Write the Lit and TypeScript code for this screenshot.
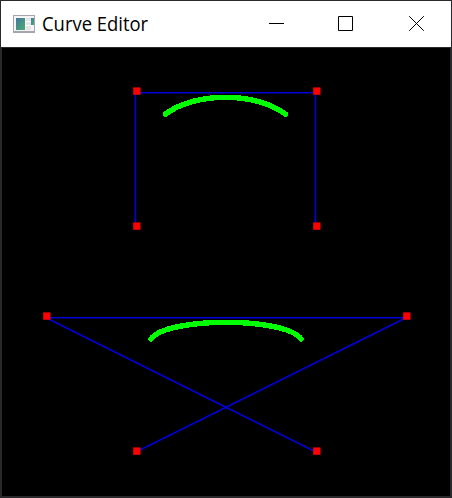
import { LitElement, html, css, svg } from "lit";
import { customElement } from "lit/decorators.js";

type Point = [number, number];

// Uniform cubic B-spline segment expressed as a Bezier path.
function splinePath([a, b, c, d]: Point[]): string {
  const mix = (f: (i: number) => number) => `${f(0).toFixed(2)} ${f(1).toFixed(2)}`;
  return `M${mix((i) => (a[i] + 4 * b[i] + c[i]) / 6)}C${mix((i) => (2 * b[i] + c[i]) / 3)} ${mix(
    (i) => (b[i] + 2 * c[i]) / 3
  )} ${mix((i) => (b[i] + 4 * c[i] + d[i]) / 6)}`;
}

const CURVES: Point[][] = [
  [[135.4, 227], [135.4, 92.7], [315.4, 92.7], [315.4, 227]],
  [[136, 452], [406, 317.7], [46, 317.7], [316, 452]],
];

@customElement("curve-canvas")
export class CurveCanvas extends LitElement {
  static styles = css`
    :host { display: block; background: #000; }
    svg { display: block; }
    .hull { fill: none; stroke: #0000d8; stroke-width: 1.6; }
    .diagonal { stroke-width: 1.3; }
    .spline { fill: none; stroke: #0f0; stroke-width: 5.4; stroke-linecap: round; shape-rendering: crispEdges; }
    .handle { fill: #f00; }
  `;
  render() {
    return html`<svg width="448" height="448" viewBox="2 48 448 448">
      ${CURVES.map(
        (pts) => svg`
          <polyline class="hull" points=${pts.map((p) => p.join(",")).join(" ")}></polyline>
          <path class="spline" transform="translate(0 -1)" d=${splinePath(pts)}></path>
          ${pts.map(
            ([x, y]) => svg`<rect class="handle" x=${Math.round(x + 0.3) - 2.8} y=${Math.floor(y) - 4.6} width="7.3" height="7.4"></rect>`
          )}`
      )}
    </svg>`;
  }
}

@customElement("app-root")
export class AppRoot extends LitElement {
  static styles = css`
    :host { display: block; }
    .window {
      box-sizing: border-box; width: 452px; height: 498px; overflow: hidden;
      background: #29292c; padding: 1px 1px 2px; display: flex; flex-direction: column;
    }
    .bar { height: 46px; flex: none; background: #fff; display: flex; align-items: center; }
    .app-icon { margin-left: 12px; width: 23px; height: 18px; flex: none; }
    .title {
      margin-left: 6px; flex: 1; color: #000; white-space: nowrap;
      font: 19.5px/46px "Open Sans", "Noto Sans", sans-serif;
    }
    .title span { display: inline-block; transform: scaleX(0.945); transform-origin: left; }
    .btn { width: 70px; height: 46px; display: flex; align-items: center; justify-content: center; flex: none; }
    .btn svg { display: block; fill: none; stroke: #000; }
    curve-canvas { width: 448px; height: 448px; margin: 1px 1px 0; }
  `;
  render() {
    return html`<div class="window">
      <div class="bar">
        <svg class="app-icon" viewBox="0 0 23 18">
          <defs>
            <linearGradient id="g" x1="0" y1="0" x2="1" y2="1">
              <stop offset="0" stop-color="#4078a0"></stop>
              <stop offset="1" stop-color="#4bab6c"></stop>
            </linearGradient>
          </defs>
          <rect width="22" height="18" fill="#a4a5ae"></rect>
          <rect x="1" y="1" width="20" height="15" fill="#f4f4f6"></rect>
          <rect x="3" y="3" width="9" height="12" fill="url(#g)"></rect>
          <rect x="13" y="3" width="5" height="12" fill="#e4e4e7"></rect>
          <rect x="13" y="6" width="5" height="1" fill="#fff"></rect>
          <rect x="13" y="10" width="5" height="1" fill="#fff"></rect>
          <rect x="18" y="3" width="3" height="7" fill="url(#g)"></rect>
        </svg>
        <div class="title"><span>Curve Editor</span></div>
        <div class="btn"><svg width="16" height="16"><path d="M1 7.5H16"></path></svg></div>
        <div class="btn"><svg width="16" height="16"><path d="M.5 .5H14.5V14.5H.5Z"></path></svg></div>
        <div class="btn"><svg width="16" height="16"><path d="M1.2 .2L15.8 14.8M15.8 .2L1.2 14.8"></path></svg></div>
      </div>
      <curve-canvas></curve-canvas>
    </div>`;
  }
}
